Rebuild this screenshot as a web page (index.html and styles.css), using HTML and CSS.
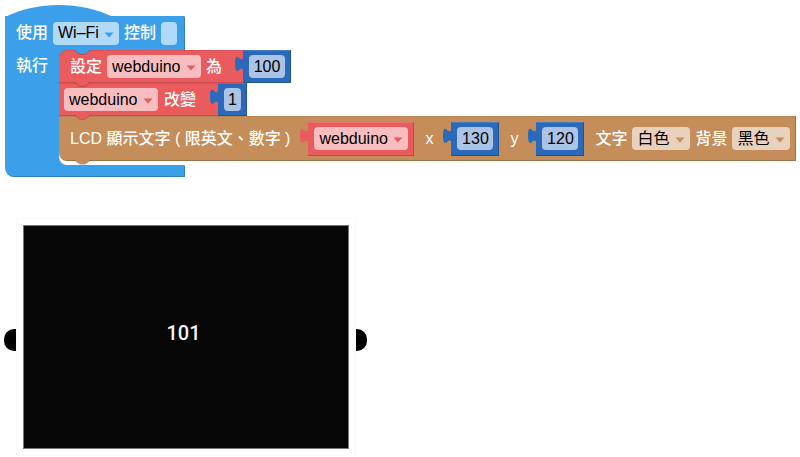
FILE: index.html
```html
<!DOCTYPE html>
<html lang="zh-Hant">
<head>
<meta charset="utf-8">
<meta name="viewport" content="width=device-width, initial-scale=1">
<title>webduino</title>
<link rel="stylesheet" href="styles.css">
</head>
<body>
<svg class="defs" aria-hidden="true">
  <symbol id="notch" viewBox="0 0 17 5"><path d="M0 0H17L11 4H6Z" fill="currentColor"/><path d="M0 .5H1L6 4.500H11L16 .5H17" fill="none" stroke="#000" stroke-opacity=".2"/></symbol>
  <symbol id="plug" viewBox="0 0 9 34"><path d="M9 6.500H8.500C8 10 6 10 4 8C2 6 0 6 0 13.500C0 21 2 22 4 20C6 18 8 18 8.500 21H9Z" fill="currentColor"/></symbol>
  <symbol id="caret" viewBox="0 0 10 6"><path d="M.5 .5H9.500L5 5.500Z" fill="currentColor"/></symbol>
</svg>
<main class="page">
  <section class="event sky">
    <svg class="hat" viewBox="0 0 108 13" aria-hidden="true"><path d="M0 13C32-3 76-3 108 13Z" fill="currentColor"/></svg>
    <div class="head">
      <label for="link">使用</label>
      <span class="pick"><select id="link"><option>Wi–Fi</option></select><svg class="caret" aria-hidden="true"><use href="#caret"/></svg></span>
      <label for="device">控制</label>
      <input class="field blank" id="device" type="text">
    </div>
    <div class="body">
      <div class="arm">執行</div>
      <div class="stack">
        <div class="row red">
          <svg class="notch top" aria-hidden="true"><use href="#notch"/></svg>
          <label for="set">設定</label>
          <span class="pick"><select id="set"><option>webduino</option></select><svg class="caret" aria-hidden="true"><use href="#caret"/></svg></span>
          <label for="start">為</label>
          <span class="value blue"><svg class="plug" aria-hidden="true"><use href="#plug"/></svg><input class="field" id="start" type="text" inputmode="numeric" value="100"></span>
          <svg class="notch" aria-hidden="true"><use href="#notch"/></svg>
        </div>
        <div class="row red snug">
          <span class="pick"><select id="change" aria-label="webduino"><option>webduino</option></select><svg class="caret" aria-hidden="true"><use href="#caret"/></svg></span>
          <label for="step">改變</label>
          <span class="value blue"><svg class="plug" aria-hidden="true"><use href="#plug"/></svg><input class="field digit" id="step" type="text" inputmode="numeric" value="1"></span>
          <svg class="notch" aria-hidden="true"><use href="#notch"/></svg>
        </div>
        <div class="row brown tall">
          <label for="text">LCD 顯示文字 ( 限英文、數字 )</label>
          <span class="value red"><svg class="plug" aria-hidden="true"><use href="#plug"/></svg><span class="pick"><select id="text"><option>webduino</option></select><svg class="caret" aria-hidden="true"><use href="#caret"/></svg></span></span>
          <label for="x">x</label>
          <span class="value blue"><svg class="plug" aria-hidden="true"><use href="#plug"/></svg><input class="field" id="x" type="text" inputmode="numeric" value="130"></span>
          <label for="y">y</label>
          <span class="value blue"><svg class="plug" aria-hidden="true"><use href="#plug"/></svg><input class="field" id="y" type="text" inputmode="numeric" value="120"></span>
          <label for="ink">文字</label>
          <span class="pick"><select id="ink"><option>白色</option></select><svg class="caret" aria-hidden="true"><use href="#caret"/></svg></span>
          <label for="paper">背景</label>
          <span class="pick"><select id="paper"><option>黑色</option></select><svg class="caret" aria-hidden="true"><use href="#caret"/></svg></span>
          <svg class="notch" aria-hidden="true"><use href="#notch"/></svg>
        </div>
      </div>
    </div>
    <div class="foot"></div>
  </section>
  <section class="device">
    <span class="knob left"></span>
    <div class="panel"><output class="screen">101</output></div>
    <span class="knob right"></span>
  </section>
</main>
</body>
</html>
```

FILE: styles.css
```css
* { box-sizing: border-box; }

body {
  margin: 0;
  background: #fff;
  font: 16px/22px "Liberation Sans", "Noto Sans CJK TC", sans-serif;
}

.defs { position: absolute; width: 0; height: 0; }

.page { padding: 16px 4px 0; }

.sky { --block: #3c9fea; --tint: #b1d9f8; }
.red { --block: #ea5b5e; --tint: #f8bdbe; }
.blue { --block: #2b69bb; --tint: #abc3e4; }
.brown { --block: #c48d5a; --tint: #e8d2bd; }

.event {
  position: relative;
  width: max-content;
  margin-left: 1px;
  color: #fff;
  font-weight: 500;
  white-space: nowrap;
}

.hat {
  position: absolute;
  top: -12px;
  left: 0;
  width: 108px;
  height: 13px;
  color: var(--block);
}

.head {
  display: flex;
  align-items: center;
  gap: 5px;
  width: 180px;
  height: 34px;
  padding: 0 6px 0 11px;
  border-radius: 0 2px 0 0;
  background: var(--block);
  box-shadow: inset -1px 0 #2f80bd;
}

.body { display: flex; }

.arm {
  width: 62px;
  margin-right: -8px;
  padding: 5px 0 0 11px;
  background: var(--block);
}

.stack {
  position: relative;
  padding-bottom: 4px;
  border-radius: 8px 0 0 8px;
  background: #fff;
}

.stack::before {
  content: "";
  position: absolute;
  width: 8px;
  height: 8px;
  background: #3c9fea;
}

.row {
  position: relative;
  display: flex;
  align-items: center;
  gap: 5px;
  width: max-content;
  height: 33px;
  padding-left: 11px;
  background: var(--block);
  box-shadow: inset 0 1px #0001, inset 0 -1px #0002;
}

.row:first-child { border-radius: 8px 0 0 0; }
.snug { gap: 6px; padding-left: 5px; }

.tall {
  height: 45px;
  padding-right: 6px;
  border-radius: 0 0 0 8px;
  box-shadow: inset 0 1px #0001, inset -1px -1px #0003;
}

.value {
  position: relative;
  display: flex;
  align-items: center;
  height: 34px;
  margin: 0 6px 0 13px;
  padding: 0 6px;
  background: var(--block);
  box-shadow: inset -1px -1px #0003, inset 0 1px #fff2;
}

.row:not(.tall) .value {
  height: 33px;
  margin: 0 0 0 16px;
}

.plug {
  position: absolute;
  top: 0;
  left: -8px;
  width: 9px;
  height: 34px;
  color: var(--block);
}

.notch {
  position: absolute;
  bottom: -4px;
  left: 15px;
  z-index: 1;
  width: 17px;
  height: 5px;
  color: var(--block);
}

.notch.top { top: 0; color: #3c9fea; }

.pick { position: relative; display: flex; }

select,
.field {
  height: 23px;
  margin: 0;
  border: 0;
  border-radius: 4px;
  outline-offset: 1px;
  background: var(--tint);
  color: #000;
  font: inherit;
  font-weight: 400;
}

select {
  appearance: none;
  padding: 0 20px 0 5px;
}

.field {
  width: 36px;
  padding: 0;
  text-align: center;
}

.digit { width: 17px; }
.blank { width: 16px; }

.caret {
  position: absolute;
  top: 10px;
  right: 5px;
  width: 10px;
  height: 6px;
  color: var(--block);
  pointer-events: none;
}

.foot {
  width: 180px;
  height: 12px;
  border-radius: 0 2px 0 9px;
  background: var(--block);
  box-shadow: inset -1px -1px #2f80bd;
}

.device {
  display: flex;
  align-items: center;
  margin-top: 41px;
}

.panel {
  flex: 0 1 340px;
  padding: 6px;
  border: 1px solid #f9f9f9;
}

.screen {
  display: flex;
  align-items: center;
  justify-content: center;
  aspect-ratio: 326 / 224;
  padding: 0 5px 8px 0;
  border: 1px solid #777;
  background: #060606;
  color: #f4f4f4;
  font: 500 20px/28px Roboto, sans-serif;
}

.knob {
  width: 12px;
  height: 22px;
  margin-top: 5px;
  background: #000;
}

.left { border-radius: 10px 0 0 10px; }
.right { width: 11px; border-radius: 0 10px 10px 0; }
```
